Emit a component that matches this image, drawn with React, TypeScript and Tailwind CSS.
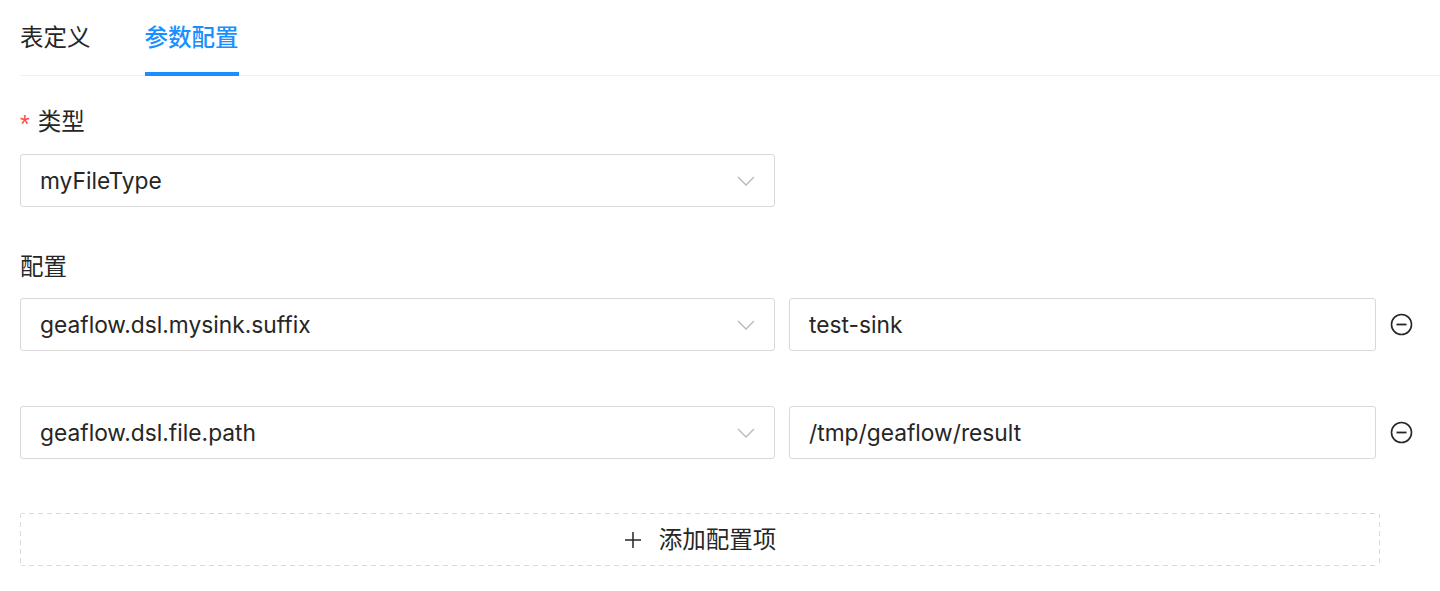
import React from "react";

const Chevron = () => (
  <svg width="18" height="10" viewBox="0 0 18 10" fill="none" className="shrink-0">
    <polyline points="1,1 9,9 17,1" stroke="#b8b8b8" strokeWidth="1.3" fill="none" />
  </svg>
);

const MinusCircle = () => (
  <svg width="23" height="23" viewBox="0 0 23 23" fill="none">
    <circle cx="11.5" cy="11.5" r="10" stroke="#262626" strokeWidth="1.6" />
    <line x1="6.5" y1="11.5" x2="16.5" y2="11.5" stroke="#262626" strokeWidth="1.8" />
  </svg>
);

const Plus = () => (
  <svg width="18" height="18" viewBox="0 0 18 18" fill="none">
    <line x1="9" y1="1" x2="9" y2="17" stroke="#262626" strokeWidth="1.5" />
    <line x1="1" y1="9" x2="17" y2="9" stroke="#262626" strokeWidth="1.5" />
  </svg>
);

const Select = ({ value }: { value: string }) => (
  <div className="w-[755px] h-[53px] shrink-0 border border-[#d9d9d9] rounded-[3px] bg-white flex items-center pl-[19px] pr-[19px] justify-between">
    <span>{value}</span>
    <Chevron />
  </div>
);

const Input = ({ value }: { value: string }) => (
  <div className="w-[587px] h-[53px] shrink-0 border border-[#d9d9d9] rounded-[3px] bg-white flex items-center pl-[19px]">
    <span>{value}</span>
  </div>
);

const Row = ({ k, v }: { k: string; v: string }) => (
  <div className="flex items-center">
    <Select value={k} />
    <div className="ml-[14px]">
      <Input value={v} />
    </div>
    <div className="ml-[14px] flex items-center">
      <MinusCircle />
    </div>
  </div>
);

export default function App() {
  return (
    <div
      className="bg-white w-[1440px] h-[591px] overflow-hidden text-[#262626] text-[22.75px] leading-[36px]"
      style={{ fontFamily: 'Inter, "Noto Sans CJK SC", sans-serif' }}
    >
      <div className="pl-[20px]">
        <div className="flex h-[76px] border-b border-[#f0f0f0] text-[23.5px]">
          <div className="relative flex items-center h-full">
            <span>表定义</span>
          </div>
          <div className="relative flex items-center h-full ml-[54px] text-[#1890ff] font-medium">
            <span>参数配置</span>
            <div className="absolute left-0 right-0 bottom-[-1px] h-[4px] bg-[#1890ff]" />
          </div>
        </div>

        <div className="mt-[28px] flex items-center h-[36px]">
          <span
            className="text-[#ff4d4f] mr-[8px] text-[25px] leading-none relative top-[2px]"
            style={{ fontFamily: '"Liberation Sans", sans-serif' }}
          >
            *
          </span>
          <span className="text-[23.5px]">类型</span>
        </div>
        <div className="mt-[14px]">
          <Select value="myFileType" />
        </div>

        <div className="mt-[42px] h-[36px] flex items-center">
          <span className="text-[23.5px]">配置</span>
        </div>
        <div className="mt-[13px] flex flex-col gap-[55px]">
          <Row k="geaflow.dsl.mysink.suffix" v="test-sink" />
          <Row k="geaflow.dsl.file.path" v="/tmp/geaflow/result" />
        </div>

        <div className="mt-[54px] w-[1360px] h-[53px] rounded-[3px] flex items-center justify-center [background:repeating-linear-gradient(90deg,#d9d9d9_0_5px,transparent_5px_9px)_top/100%_1px_no-repeat,repeating-linear-gradient(90deg,#d9d9d9_0_5px,transparent_5px_9px)_bottom/100%_1px_no-repeat,repeating-linear-gradient(180deg,#d9d9d9_0_5px,transparent_5px_9px)_left/1px_100%_no-repeat,repeating-linear-gradient(180deg,#d9d9d9_0_5px,transparent_5px_9px)_right/1px_100%_no-repeat]">
          <Plus />
          <span className="ml-[17px] text-[23.5px]">添加配置项</span>
        </div>
      </div>
    </div>
  );
}
